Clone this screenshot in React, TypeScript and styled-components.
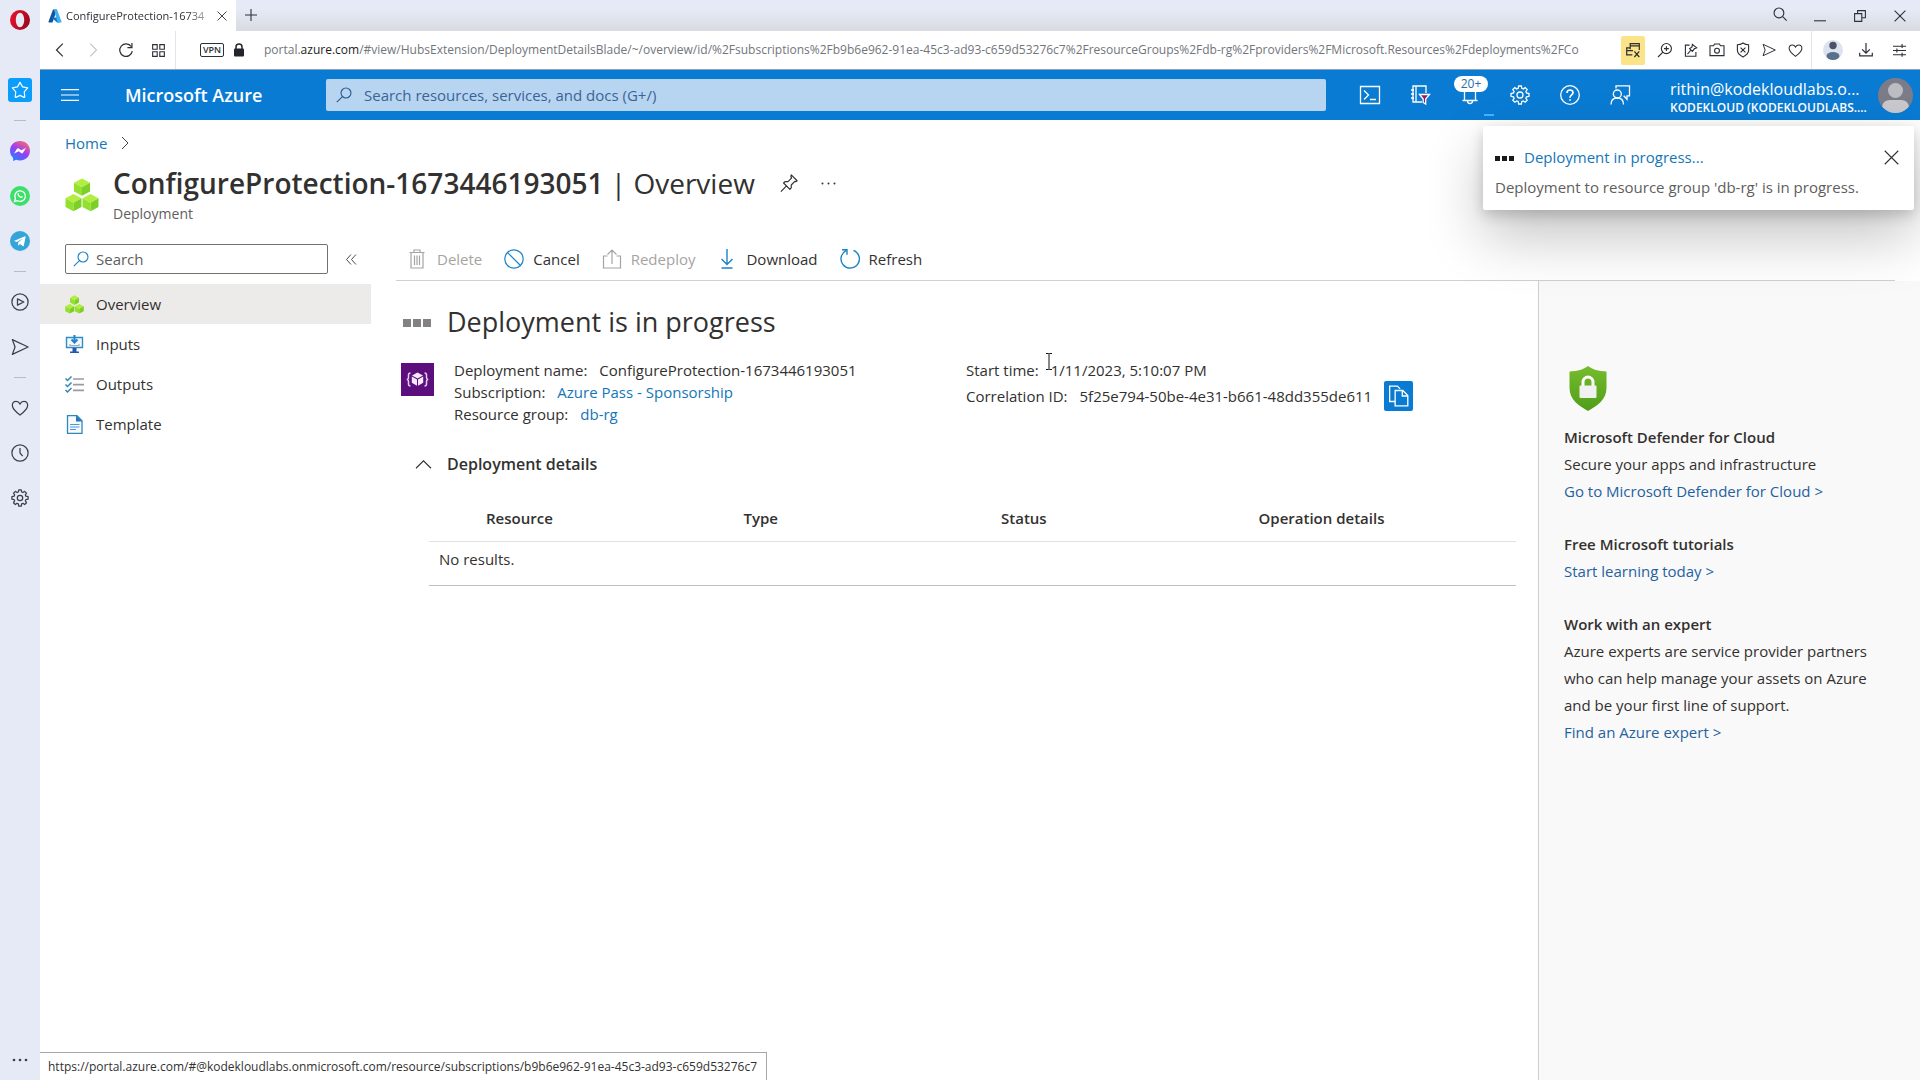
import React from "react";
import styled, { createGlobalStyle, css } from "styled-components";

const color = {
  text: "#323130",
  muted: "#605e5c",
  faded: "#a6a4a2",
  link: "#1476b8",
  panelLink: "#1f62a0",
  azure: "#0a7bd3",
  chrome: "#e6eaf6",
  line: "#d2d0ce",
};

const GlobalStyle = createGlobalStyle`
  *, *::before, *::after { box-sizing: border-box; }
  body {
    margin: 0;
    background: #fff;
    color: ${color.text};
    font-family: "Open Sans", "Noto Sans", sans-serif;
    font-size: 15px;
    line-height: 22px;
  }
  button, input { font: inherit; color: inherit; }
  h1, h2, h3, p, ul, dl, dd { margin: 0; padding: 0; }
  ul { list-style: none; }
  svg { display: block; flex: none; }
`;

/* ---------- icons ---------- */

const StrokeSvg = styled.svg<{ $tone?: string }>`
  fill: none;
  stroke: ${(p) => p.$tone ?? "currentColor"};
  overflow: visible;
`;

type IconProps = {
  size?: number;
  w?: number;
  tone?: string;
  children: React.ReactNode;
};

/* 20-unit grid outline icon */
const Icon = ({ size = 20, w = 1.2, tone, children }: IconProps) => (
  <StrokeSvg width={size} height={size} viewBox="0 0 20 20" strokeWidth={w} $tone={tone} aria-hidden="true">
    {children}
  </StrokeSvg>
);

const GEAR =
  "M8.6 1h2.8l.4 2.3 1.5.6 1.9-1.3 2 2-1.3 1.9.6 1.5 2.5.5v2.8l-2.5.5-.6 1.5 1.3 1.9-2 2-1.9-1.3-1.5.6-.4 2.5H8.6l-.4-2.5-1.5-.6-1.9 1.3-2-2 1.3-1.9-.6-1.5L1 11.3V8.5L3.500 8l.6-1.5-1.3-1.900 2-2 1.900 1.300 1.500-.6z";

const SearchLeft = ({ size = 17, tone }: { size?: number; tone?: string }) => (
  <Icon size={size} tone={tone} w={1.4}>
    <circle cx="12.500" cy="7.500" r="6.200" />
    <path d="M8 12 1 19" />
  </Icon>
);

const Cross = ({ size = 12, w = 1.8 }: { size?: number; w?: number }) => (
  <Icon size={size} w={w}>
    <path d="m1 1 18 18M19 1 1 19" />
  </Icon>
);

const Heart = ({ size = 18 }: { size?: number }) => (
  <Icon size={size} w={1.4}>
    <path d="M10 17.800C5 14 1.500 10.800 1.500 7.200 1.500 4.500 3.400 2.700 5.700 2.700c1.800 0 3.400 1 4.300 2.800.9-1.800 2.500-2.800 4.300-2.800 2.300 0 4.200 1.800 4.200 4.500 0 3.600-3.500 6.800-8.500 10.600z" />
  </Icon>
);

const SendArrow = ({ size = 18 }: { size?: number }) => (
  <Icon size={size} w={1.4}>
    <path d="M1.500 1.800 19 10 1.500 18.200 4.500 10z" strokeLinejoin="round" />
  </Icon>
);

const Cube = ({ x, y }: { x: number; y: number }) => (
  <g stroke="none">
    <path d={`M${x} ${y - 8.5} l8 4.200 -8 4.500 -8 -4.500z`} fill="#b2ee3f" />
    <path d={`M${x - 8} ${y - 4.300} l8 4.500 v8.600 l-8 -4.400z`} fill="#93e02e" />
    <path d={`M${x + 8} ${y - 4.300} l-8 4.500 v8.600 l8 -4.400z`} fill="#7ccf26" />
  </g>
);

const CubesIcon = ({ size }: { size: number }) => (
  <StrokeSvg width={size} height={size} viewBox="0 0 34 34" aria-hidden="true">
    <Cube x={17} y={9} />
    <Cube x={8.500} y={24.500} />
    <Cube x={25.500} y={24.500} />
  </StrokeSvg>
);

const AzureLogo = () => (
  <svg width="14" height="14" viewBox="0 0 28 28" aria-hidden="true">
    <path d="M10 1h8L9 27H2.500A1.500 1.500 0 0 1 1 25z" fill="#12549c" />
    <path d="M7 17h13l3 10h-5z" fill="#0b77d0" />
    <path d="M12 1h6l9 24a1.500 1.500 0 0 1-1.500 2H19z" fill="#3fb0f0" />
  </svg>
);

/* ---------- browser frame ---------- */

const Browser = styled.div`
  display: flex;
  min-height: 100vh;
`;

const Rail = styled.nav`
  display: flex;
  flex: none;
  flex-direction: column;
  align-items: center;
  width: 40px;
  padding: 8px 0;
  background: ${color.chrome};
  color: #3c4048;
`;

const RailGroup = styled.div`
  display: flex;
  flex-direction: column;
  gap: 21px;
`;

const IconButton = styled.button<{ $w?: number; $h?: number }>`
  display: flex;
  flex: none;
  align-items: center;
  justify-content: center;
  width: ${(p) => p.$w ?? 24}px;
  height: ${(p) => p.$h ?? 24}px;
  padding: 0;
  border: 0;
  background: none;
`;

const OperaButton = styled(IconButton)`
  margin-bottom: 46px;
`;

const ActiveRailButton = styled(IconButton)`
  border-radius: 3px;
  background: #0a9dfc;
  color: #fff;
`;

const MoreRailButton = styled(IconButton)`
  margin-top: auto;
`;

const RailDivider = styled.hr`
  width: 12px;
  height: 1px;
  margin: 18px 0;
  border: 0;
  background: #b9bcc6;
`;

const Window = styled.div`
  display: flex;
  flex: 1;
  flex-direction: column;
  min-width: 0;
`;

const TabStrip = styled.div`
  display: flex;
  height: 31px;
  background: linear-gradient(#e6eaf6 30%, #d8dbe0);
  color: #2b2f36;
`;

const Tab = styled.div`
  display: flex;
  align-items: center;
  width: 196px;
  padding: 0 4px 0 8px;
  gap: 4px;
  background: #fff;
`;

const TabTitle = styled.span`
  flex: 1;
  font-size: 11px;
  white-space: nowrap;
  mask-image: linear-gradient(90deg, #000 85%, rgba(0, 0, 0, 0.3));
`;

const WindowControls = styled.div`
  display: flex;
  margin-left: auto;
`;

const AddressBar = styled.div`
  display: flex;
  align-items: center;
  height: 39px;
  padding-left: 3px;
  border-bottom: 1px solid #8fa3b8;
  color: #2b2f36;
`;

const BarDivider = styled.span`
  flex: none;
  width: 1px;
  height: 38px;
  background: #e4e5ea;
`;

const AddressGap = styled.span`
  flex: none;
  width: 3px;
`;

const VpnBadge = styled.button`
  flex: none;
  width: 24px;
  height: 14px;
  margin: 0 9px 0 24px;
  padding: 0;
  border: 1px solid #2b2f36;
  border-radius: 2px;
  background: none;
  font-size: 9px;
  font-weight: 600;
  line-height: 12px;
`;

const Url = styled.div`
  flex: 1;
  min-width: 0;
  margin: 0 4px 0 19px;
  overflow: hidden;
  color: #71757c;
  font-size: 12px;
  white-space: nowrap;
`;

const UrlHost = styled.span`
  color: #1c1e22;
`;

const PopupBlocked = styled(IconButton)`
  margin-right: 7px;
  border-radius: 2px;
  background: #fbe387;
`;

const DisabledIconButton = styled(IconButton)`
  color: #c4c6cb;
`;

const StatusBar = styled.div`
  position: fixed;
  bottom: 0;
  left: 40px;
  height: 28px;
  padding: 3px 9px 0 8px;
  border: 1px solid #a8a8a8;
  border-width: 1px 1px 0 0;
  background: #fff;
  font-size: 12px;
`;

/* ---------- portal top bar ---------- */

const TopBar = styled.header`
  display: flex;
  align-items: center;
  height: 50px;
  background: ${color.azure};
  color: #fff;
`;

const Brand = styled.a`
  width: 201px;
  margin-left: 25px;
  color: #fff;
  font-size: 18px;
  font-weight: 600;
  text-decoration: none;
`;

const searchField = css`
  display: flex;
  align-items: center;
  input {
    flex: 1;
    min-width: 0;
    padding: 0;
    border: 0;
    outline: 0;
    background: none;
  }
`;

const GlobalSearch = styled.label`
  ${searchField}
  flex: 1;
  gap: 12px;
  height: 32px;
  padding: 0 9px 0 10px;
  margin-right: 19px;
  border-radius: 2px;
  background: #b7d5f1;
  color: #285a92;
  input::placeholder { color: #3a6496; opacity: 1; }
`;

const BellButton = styled(IconButton)`
  position: relative;
`;

const Badge = styled.span`
  position: absolute;
  top: 6px;
  left: 9px;
  width: 34px;
  border-radius: 8px;
  background: #fff;
  color: #2a6ca8;
  font-size: 12px;
  line-height: 16px;
`;

const BellProgress = styled.span`
  position: absolute;
  right: 1px;
  bottom: 4px;
  width: 10px;
  height: 2px;
  background: #41b4ff;
`;

const Account = styled.button`
  display: flex;
  align-items: center;
  gap: 12px;
  width: 275px;
  padding: 0 7px 0 25px;
  border: 0;
  background: none;
  text-align: left;
`;

const AccountText = styled.span`
  flex: 1;
  min-width: 0;
  padding-top: 3px;
`;

const AccountMail = styled.span`
  display: block;
  font-size: 16px;
  line-height: 22px;
`;

const AccountTenant = styled.span`
  display: block;
  font-size: 12px;
  font-weight: 600;
  line-height: 16px;
  white-space: nowrap;
`;

/* ---------- blade ---------- */

const Blade = styled.main`
  position: relative;
  display: flex;
  flex: 1;
  flex-direction: column;
`;

const Link = styled.a`
  color: ${color.link};
  text-decoration: none;
`;

const Breadcrumb = styled.nav`
  display: flex;
  align-items: center;
  gap: 12px;
  padding: 12px 25px 0;
`;

const BladeHeader = styled.div`
  display: flex;
  align-items: flex-start;
  gap: 14px;
  padding: 9px 25px 0;
`;

const BladeIcon = styled.span`
  padding-top: 15px;
`;

const TitleRow = styled.div`
  display: flex;
  align-items: center;
  gap: 22px;
`;

const Title = styled.h1`
  font-size: 28px;
  font-weight: 600;
  line-height: 40px;
`;

const TitleSection = styled.span`
  font-weight: 400;
`;

const Subtitle = styled.p`
  margin-top: 1px;
  color: ${color.muted};
  font-size: 14px;
  line-height: 20px;
`;

const TitleActions = styled.div`
  display: flex;
  gap: 16px;
`;

const Columns = styled.div`
  display: flex;
  flex: 1;
  gap: 25px;
`;

const Menu = styled.nav`
  flex: none;
  width: 331px;
  padding-top: 20px;
`;

const MenuSearchRow = styled.div`
  display: flex;
  align-items: center;
  gap: 11px;
  padding: 0 0 10px 25px;
`;

const MenuSearch = styled.label`
  ${searchField}
  gap: 7px;
  width: 263px;
  height: 30px;
  padding: 0 8px 0 7px;
  border: 1px solid #74726f;
  border-radius: 2px;
  input::placeholder { color: ${color.muted}; opacity: 1; }
`;

const MenuItem = styled.a<{ $active?: boolean }>`
  display: flex;
  align-items: center;
  gap: 12px;
  height: 40px;
  padding-left: 25px;
  background: ${(p) => (p.$active ? "#edebe9" : "none")};
  color: ${color.text};
  text-decoration: none;
`;

const Work = styled.div`
  display: flex;
  flex: 1;
  flex-direction: column;
  min-width: 0;
`;

const CommandBar = styled.div`
  display: flex;
  align-items: center;
  gap: 22px;
  height: 57px;
  margin-right: 25px;
  padding: 14px 0 0 12px;
  border-bottom: 1px solid ${color.line};
`;

const Command = styled.button`
  display: flex;
  align-items: center;
  gap: 9px;
  padding: 0;
  border: 0;
  background: none;
  &:disabled { color: ${color.faded}; }
`;

const WorkBody = styled.div`
  display: flex;
  flex: 1;
`;

const Content = styled.section`
  flex: 1;
  min-width: 0;
  padding: 23px 22px 0 5px;
`;

const StatusHeading = styled.div`
  display: flex;
  align-items: center;
  gap: 16px;
  padding-left: 2px;
`;

const Heading = styled.h2`
  font-size: 27px;
  font-weight: 400;
  line-height: 36px;
`;

const Dots = styled.span<{ $size: number; $tone: string }>`
  display: flex;
  gap: 2px;
  padding-top: 2px;
  &::before, &::after, i {
    width: ${(p) => p.$size}px;
    height: ${(p) => p.$size}px;
    background: ${(p) => p.$tone};
    content: "";
  }
`;

const Summary = styled.div`
  display: flex;
  gap: 20px;
  padding: 19px 38px 0 0;
`;

const SummaryIcon = styled.span`
  padding-top: 4px;
`;

const Facts = styled.div`
  display: grid;
  flex: 1;
  grid-template-columns: 1fr 1fr;
`;

const FactList = styled.dl``;

const Fact = styled.div`
  display: flex;
  gap: 12px;
  white-space: nowrap;
`;

const CorrelationFact = styled(Fact)`
  align-items: center;
  height: 30px;
`;

const CopyButton = styled(IconButton)`
  border-radius: 2px;
  background: ${color.azure};
  color: #fff;
`;

const DetailsToggle = styled.button`
  display: flex;
  align-items: center;
  gap: 16px;
  margin: 27px 0 20px;
  padding: 0 0 0 15px;
  border: 0;
  background: none;
  font-size: 16px;
  font-weight: 600;
  line-height: 24px;
`;

const TableWrap = styled.div`
  padding-left: 28px;
`;

const Table = styled.table`
  width: 100%;
  border-collapse: collapse;
  table-layout: fixed;
`;

const HeadCell = styled.th<{ $indent?: boolean }>`
  width: ${(p) => (p.$indent ? "57px" : "auto")};
  height: 45px;
  padding: 0;
  border-bottom: 1px solid #e3e1df;
  font-weight: 600;
  text-align: left;
`;

const EmptyCell = styled.td`
  height: 44px;
  padding: 6px 10px 0;
  border-bottom: 1px solid #c3c1bf;
  vertical-align: top;
`;

const Promo = styled.aside`
  flex: none;
  width: 382px;
  padding: 84px 40px 0 25px;
  border-left: 1px solid #d0cfce;
  background: #faf9f9;
`;

const PromoBlock = styled.section`
  margin-bottom: 26px;
  line-height: 27px;
`;

const PromoTitle = styled.h3`
  font-size: 15px;
  font-weight: 600;
`;

const PromoLink = styled(Link)`
  color: ${color.panelLink};
`;

const ShieldWrap = styled.div`
  margin-bottom: 11px;
`;

const Toast = styled.div`
  position: absolute;
  top: 6px;
  right: 6px;
  width: 431px;
  padding: 19px 13px 12px 12px;
  border-radius: 2px;
  background: #fff;
  box-shadow: 0 26px 58px rgba(0, 0, 0, 0.24), 0 5px 14px rgba(0, 0, 0, 0.18);
`;

const ToastHead = styled.div`
  display: flex;
  align-items: center;
  gap: 10px;
  height: 24px;
  margin-bottom: 7px;
`;

const ToastClose = styled(IconButton)`
  margin-left: auto;
`;

const ToastText = styled.p`
  color: ${color.muted};
`;

const Pointer = styled.svg`
  position: absolute;
  top: 233px;
  left: 1005px;
`;

/* ---------- composed parts ---------- */

const SideRail = () => (
  <Rail aria-label="Browser sidebar">
    <OperaButton aria-label="Opera menu">
      <svg width="20" height="20" viewBox="0 0 20 20">
        <defs>
          <linearGradient id="opera" x1="0" x2="1" y1="0" y2="0.4">
            <stop offset="0" stopColor="#f0142f" />
            <stop offset="1" stopColor="#a00a1c" />
          </linearGradient>
        </defs>
        <path
          d="M10 0a10 10 0 1 0 0 20 10 10 0 0 0 0-20zm0 2.800c2.400 0 4.200 3.200 4.200 7.200s-1.800 7.200-4.200 7.200S5.800 14 5.800 10 7.600 2.800 10 2.800z"
          fill="url(#opera)"
          fillRule="evenodd"
        />
      </svg>
    </OperaButton>
    <ActiveRailButton aria-label="Speed dial">
      <Icon size={18} w={1.3}>
        <path d="m10 1.500 2.800 5 5.700 1.200-3.800 4.300.6 5.700q-.1.700-.8.500L10 16l-4.500 2.200q-.7.200-.8-.5l.6-5.700L1.500 7.700l5.700-1.200z" strokeLinejoin="round" />
      </Icon>
    </ActiveRailButton>
    <RailDivider />
    <RailGroup>
      <IconButton aria-label="Messenger">
        <svg width="20" height="20" viewBox="0 0 20 20">
          <defs>
            <linearGradient id="msgr" x1="0.200" x2="0.800" y1="1" y2="0">
              <stop offset="0" stopColor="#1a86ff" />
              <stop offset="0.500" stopColor="#9a3cf5" />
              <stop offset="1" stopColor="#ff6a70" />
            </linearGradient>
          </defs>
          <path d="M10 0C4.300 0 0 4.200 0 9.700c0 2.900 1.200 5.300 3.100 7V20l3.100-1.200c1.200.4 2.500.6 3.800.6 5.700 0 10-4.200 10-9.700S15.700 0 10 0z" fill="url(#msgr)" />
          <path d="m4 12.500 3-4.700q.8-1 1.900-.3l2.300 1.800 4.800-2.300-3 4.800q-.8 1-1.900.3L8.800 10.300z" fill="#fff" />
        </svg>
      </IconButton>
      <IconButton aria-label="WhatsApp">
        <svg width="20" height="20" viewBox="0 0 20 20">
          <circle cx="10" cy="10" r="10" fill="#3be06a" />
          <path d="m4.500 15.500.9-3A5.300 5.300 0 1 1 7.500 14.700z" fill="none" stroke="#fff" strokeWidth="1.300" />
          <path d="M7.900 7.300q.8-.7 1.200.8-.5.700 0 1.200 1 1 1.700 1.300l.7-.6q1.500.4 1.300.9-.6 1.500-2.300 1Q8 10.800 7.500 9q-.2-1.100.4-1.700z" fill="#fff" />
        </svg>
      </IconButton>
      <IconButton aria-label="Telegram">
        <svg width="20" height="20" viewBox="0 0 20 20">
          <circle cx="10" cy="10" r="10" fill="#35a5d9" />
          <path d="M3.800 10 15 5.300q.8-.1.600.8l-1.800 8.600q-.3.800-1 .4L10 13l-1.400 1.400-.5-.2.100-2.700L13 7.200 7 11z" fill="#fff" />
        </svg>
      </IconButton>
    </RailGroup>
    <RailDivider />
    <RailGroup>
      <IconButton aria-label="Player">
        <Icon size={18} w={1.4}>
          <circle cx="10" cy="10" r="9" />
          <path d="M7.200 6.500v7l7-3.500z" strokeLinejoin="round" />
        </Icon>
      </IconButton>
      <IconButton aria-label="My Flow">
        <SendArrow />
      </IconButton>
    </RailGroup>
    <RailDivider />
    <RailGroup>
      <IconButton aria-label="Bookmarks">
        <Heart />
      </IconButton>
      <IconButton aria-label="History">
        <Icon size={18} w={1.400}>
          <circle cx="10" cy="10" r="9" />
          <path d="M10 4.500V10l3 3.500" />
        </Icon>
      </IconButton>
      <IconButton aria-label="Settings">
        <Icon size={18} w={1.400}>
          <path d={GEAR} strokeLinejoin="round" />
          <circle cx="10" cy="10" r="3" />
        </Icon>
      </IconButton>
    </RailGroup>
    <MoreRailButton aria-label="Sidebar setup">
      <Icon size={16} w={0}>
        <g fill="currentColor">
          <circle cx="2.500" cy="10" r="1.700" />
          <circle cx="10" cy="10" r="1.700" />
          <circle cx="17.500" cy="10" r="1.700" />
        </g>
      </Icon>
    </MoreRailButton>
  </Rail>
);

const Tabs = () => (
  <TabStrip>
    <Tab>
      <AzureLogo />
      <TabTitle>ConfigureProtection-16734</TabTitle>
      <IconButton $w={20} aria-label="Close tab">
        <Cross size={10} />
      </IconButton>
    </Tab>
    <IconButton $w={30} $h={30} aria-label="New tab">
      <Icon size={12} w={1.800}>
        <path d="M10 0v20M0 10h20" />
      </Icon>
    </IconButton>
    <WindowControls>
      <IconButton $w={40} $h={28} aria-label="Search tabs">
        <Icon size={14} w={1.600}>
          <circle cx="8.500" cy="8.500" r="7" />
          <path d="m13.500 13.500 6 6" />
        </Icon>
      </IconButton>
      <IconButton $w={40} $h={31} aria-label="Minimize">
        <Icon size={12} w={1.800}>
          <path d="M0 18h20" />
        </Icon>
      </IconButton>
      <IconButton $w={40} $h={31} aria-label="Restore">
        <Icon size={12} w={1.800}>
          <path d="M1 6h12v13H1zM6 6V1h13v12h-6" />
        </Icon>
      </IconButton>
      <IconButton $w={40} $h={31} aria-label="Close window">
        <Cross />
      </IconButton>
    </WindowControls>
  </TabStrip>
);

const Address = () => (
  <AddressBar>
    <IconButton $w={33} aria-label="Back">
      <Icon size={14} w={1.700}>
        <path d="M14 1 5 10l9 9" />
      </Icon>
    </IconButton>
    <DisabledIconButton $w={33} disabled aria-label="Forward">
      <Icon size={14} w={1.700}>
        <path d="m6 1 9 9-9 9" />
      </Icon>
    </DisabledIconButton>
    <IconButton $w={33} aria-label="Reload">
      <Icon size={14} w={1.700}>
        <path d="M17.500 5A9 9 0 1 0 19 11.500M18.500 0v6.500H12" />
      </Icon>
    </IconButton>
    <IconButton $w={33} aria-label="Speed dial">
      <Icon size={13} w={1.700}>
        <path d="M1 1h7v7H1zM12 1h7v7h-7zM1 12h7v7H1zM12 12h7v7h-7z" />
      </Icon>
    </IconButton>
    <BarDivider />
    <VpnBadge>VPN</VpnBadge>
    <svg width="12" height="14" viewBox="0 0 12 14" aria-hidden="true">
      <path d="M3 6V4a3 3 0 0 1 6 0v2" fill="none" stroke="#22252b" strokeWidth="1.500" />
      <rect x="1" y="5.500" width="10" height="8" rx="1" fill="#22252b" />
    </svg>
    <Url>
      portal.<UrlHost>azure.com</UrlHost>
      /#view/HubsExtension/DeploymentDetailsBlade/~/overview/id/%2Fsubscriptions%2Fb9b6e962-91ea-45c3-ad93-c659d53276c7%2FresourceGroups%2Fdb-rg%2Fproviders%2FMicrosoft.Resources%2Fdeployments%2FCo
    </Url>
    <PopupBlocked $h={29} aria-label="Pop-up blocked">
      <Icon size={14} w={1.700}>
        <path d="M6 9V1h13v9M6 4h13M6 7H1v10h8M1 11h9M12 12l7 8M19 12l-7 8" />
      </Icon>
    </PopupBlocked>
    <IconButton $w={26} aria-label="Zoom">
      <Icon size={14} w={1.600}>
        <circle cx="12" cy="8" r="7.200" />
        <path d="M7 13 0 20M12 4.500v7M8.500 8h7" />
      </Icon>
    </IconButton>
    <IconButton $w={26} aria-label="Pinboards">
      <Icon size={14} w={1.600}>
        <path d="M8 3H2v16h15v-6M12 2l6 5-3 1-3 4-4-4 3.500-2.500zM10 10l-5 6" />
      </Icon>
    </IconButton>
    <IconButton $w={26} aria-label="Snapshot">
      <Icon size={14} w={1.600}>
        <path d="M0 4h5l1.500-2.500h7L15 4h5v14H0z" />
        <circle cx="10" cy="11" r="3.500" />
      </Icon>
    </IconButton>
    <IconButton $w={26} aria-label="Ad blocker">
      <Icon size={14} w={1.600}>
        <path d="M10 0c3 2 6 2.500 8 2.500v8c0 4-4 7.500-8 9.500-4-2-8-5.500-8-9.500v-8C4 2.500 7 2 10 0zM6.500 6.500l7 7M13.500 6.500l-7 7" />
      </Icon>
    </IconButton>
    <IconButton $w={26} aria-label="Send to My Flow">
      <SendArrow size={14} />
    </IconButton>
    <IconButton $w={26} aria-label="Add to bookmarks">
      <Heart size={15} />
    </IconButton>
    <AddressGap />
    <BarDivider />
    <IconButton $w={42} aria-label="Profile">
      <svg width="20" height="20" viewBox="0 0 20 20">
        <circle cx="10" cy="10" r="10" fill="#dde2f0" />
        <circle cx="10" cy="5.500" r="3.700" fill="#4c5266" />
        <ellipse cx="10" cy="16" rx="6.500" ry="4" fill="#59708c" />
      </svg>
    </IconButton>
    <IconButton $w={24} aria-label="Downloads">
      <Icon size={14} w={1.700}>
        <path d="M10 0v14M4.500 9l5.500 5.500L15.500 9M1 14v4.500h18V14" />
      </Icon>
    </IconButton>
    <IconButton $w={42} aria-label="Easy setup">
      <Icon size={13} w={1.700}>
        <path d="M0 3.500h20M0 10h20M0 16.500h20M14 0v6M6 7v6M14 13.500v6" />
      </Icon>
    </IconButton>
  </AddressBar>
);

const PortalBar = () => (
  <TopBar>
    <IconButton $w={60} $h={50} aria-label="Show portal menu">
      <Icon size={18} w={1.300}>
        <path d="M0 4h20M0 10h20M0 16h20" />
      </Icon>
    </IconButton>
    <Brand href="#home">Microsoft Azure</Brand>
    <GlobalSearch>
      <SearchLeft size={16} tone="#285a92" />
      <input aria-label="Search resources" placeholder="Search resources, services, and docs (G+/)" />
    </GlobalSearch>
    <IconButton $w={50} $h={50} aria-label="Cloud Shell">
      <Icon w={1.300}>
        <path d="M.5 1.500h19v17H.5zM4 5.500l4.500 4.500L4 14.500M10 14.500h6" />
      </Icon>
    </IconButton>
    <IconButton $w={50} $h={50} aria-label="Directories and subscriptions">
      <Icon w={1.300}>
        <path d="M12 17H3V1h13v7M6 1v16M1 5h3M1 9h3M1 13h3" />
        <path d="M9.500 9.500h10l-3.800 4.500v5l-2.500-1.500V14z" fill="#8d1f6b" />
      </Icon>
    </IconButton>
    <BellButton $w={50} $h={50} aria-label="Notifications, more than 20">
      <Icon w={1.300}>
        <path d="M4.500 15.500V6a5.500 5.500 0 0 1 11 0v9.500M2.500 15.500h15M7.500 16a2.500 2.500 0 0 0 5 0" />
      </Icon>
      <Badge>20+</Badge>
      <BellProgress />
    </BellButton>
    <IconButton $w={50} $h={50} aria-label="Portal settings">
      <Icon w={1.300}>
        <path d={GEAR} />
        <circle cx="10" cy="10" r="3" />
      </Icon>
    </IconButton>
    <IconButton $w={50} $h={50} aria-label="Help">
      <Icon w={1.300}>
        <circle cx="10" cy="10" r="9.300" />
        <path d="M7 8q0-3 3-3t3 2.700c0 2.300-3 2.200-3 5M10 14.200v1.600" strokeWidth="1.700" />
      </Icon>
    </IconButton>
    <IconButton $w={50} $h={50} aria-label="Feedback">
      <Icon w={1.300}>
        <path d="M6 3.500V.8h13.500v10H17v3.500l-3.300-3.500M1 19.500c0-4 2.500-6.500 6.300-6.500s6.200 2.500 6.200 6.500" />
        <circle cx="7.300" cy="9" r="4" />
      </Icon>
    </IconButton>
    <Account>
      <AccountText>
        <AccountMail>rithin@kodekloudlabs.o...</AccountMail>
        <AccountTenant>KODEKLOUD (KODEKLOUDLABS....</AccountTenant>
      </AccountText>
      <svg width="35" height="35" viewBox="0 0 35 35" aria-hidden="true">
        <defs>
          <clipPath id="avatar">
            <circle cx="17.500" cy="17.500" r="17.500" />
          </clipPath>
        </defs>
        <g clipPath="url(#avatar)">
          <rect width="35" height="35" fill="#7b7c88" />
          <circle cx="17.500" cy="12.500" r="7.500" fill="#bcbcc3" />
          <path d="M4 35V29q1-7 8-7h11q7 0 8 7v6z" fill="#c8c8ce" />
        </g>
      </svg>
    </Account>
  </TopBar>
);

const InputsIcon = () => (
  <svg width="19" height="19" viewBox="0 0 19 19" aria-hidden="true">
    <path d="M1.500 2.500h16v10h-16z" fill="#f2f8fd" stroke="#2f8dc4" strokeWidth="1.400" />
    <path d="M9.500 0v6.500M6.500 4.500l3 3 3-3" fill="none" stroke="#1d84cf" strokeWidth="2" />
    <path d="M5 9v1.500h9V9" fill="none" stroke="#a9adb5" strokeWidth="1.200" />
    <path d="M7.500 13h4v3.500h2.500V18H5v-1.500h2.500z" fill="#2257b8" />
  </svg>
);

const OutputsIcon = () => (
  <svg width="19" height="19" viewBox="0 0 19 19" aria-hidden="true">
    <path d="m.5 3.500 2 2 4-4M.5 9.500l2 2 4-4M.5 15l2 2 4-4" fill="none" stroke="#2f87b5" strokeWidth="1.500" />
    <path d="M8 4h11M8 9.700h11M8 15.300h11" stroke="#9c9ba3" strokeWidth="1.700" />
  </svg>
);

const TemplateIcon = () => (
  <svg width="19" height="19" viewBox="0 0 19 19" aria-hidden="true">
    <path d="M2.500.7h9.500l5 5v12.600H2.500z" fill="#f7fbfe" stroke="#2f87b5" strokeWidth="1.300" />
    <path d="M11 .5v6h6z" fill="#1c76bd" />
    <path d="M5 9.500h9.500M5 12h9.500M5 14.500h6" stroke="#4d9ad6" strokeWidth="1.200" />
  </svg>
);

const menuItems = [
  { label: "Overview", icon: <CubesIcon size={19} />, active: true },
  { label: "Inputs", icon: <InputsIcon /> },
  { label: "Outputs", icon: <OutputsIcon /> },
  { label: "Template", icon: <TemplateIcon /> },
];

const commands = [
  {
    label: "Delete",
    disabled: true,
    icon: (
      <Icon>
        <path d="M1.500 3.500h15M6 3.500V1h6v2.500M3 3.500V19h12V3.500M6.500 6.500v9.500M9 6.500v9.500M11.500 6.500v9.500" />
      </Icon>
    ),
  },
  {
    label: "Cancel",
    icon: (
      <Icon tone="#1b83c6">
        <circle cx="10" cy="10" r="9.200" />
        <path d="m3.500 3.500 13 13" />
      </Icon>
    ),
  },
  {
    label: "Redeploy",
    disabled: true,
    icon: (
      <Icon>
        <path d="M5.500 7H1.500v12h17V7h-4M10 15V1M5.500 5.500 10 1l4.500 4.500" />
      </Icon>
    ),
  },
  {
    label: "Download",
    icon: (
      <Icon tone="#1b83c6">
        <path d="M10 0v15.500M4.500 10l5.500 5.500 5.500-5.500M4.500 19h11" strokeWidth="1.400" />
      </Icon>
    ),
  },
  {
    label: "Refresh",
    icon: (
      <Icon tone="#1b83c6">
        <path d="M13.500 1.300A9.200 9.200 0 1 1 6 1.700M2 .8h5v5" strokeWidth="1.400" />
      </Icon>
    ),
  },
];

const SideMenu = () => (
  <Menu aria-label="Resource menu">
    <MenuSearchRow>
      <MenuSearch>
        <SearchLeft size={16} tone="#1b83c6" />
        <input aria-label="Search menu" placeholder="Search" />
      </MenuSearch>
      <IconButton aria-label="Collapse menu">
        <Icon size={11} w={1.600}>
          <path d="M9 1 1 10l8 9M18 1l-8 9 8 9" />
        </Icon>
      </IconButton>
    </MenuSearchRow>
    <ul>
      {menuItems.map((item) => (
        <li key={item.label}>
          <MenuItem href={`#${item.label.toLowerCase()}`} $active={item.active}>
            {item.icon}
            {item.label}
          </MenuItem>
        </li>
      ))}
    </ul>
  </Menu>
);

const DeploymentSummary = () => (
  <Summary>
    <SummaryIcon>
      <svg width="33" height="33" viewBox="0 0 33 33" aria-hidden="true">
        <rect width="33" height="33" fill="#5c0f7c" />
        <path d="M9.500 10q-2 0-2 2v2.500q0 2-1.800 2 1.800 0 1.800 2V21q0 2 2 2M23.500 10q2 0 2 2v2.500q0 2 1.800 2-1.800 0-1.800 2V21q0 2-2 2" fill="none" stroke="#e4cdf0" strokeWidth="1.500" />
        <path d="m16.500 9.500 5.500 3-5.500 3-5.500-3zM10.800 13.500l5.200 2.900v6.300l-5.200-3zM22.200 13.500 17 16.400v6.300l5.200-3z" fill="#f4eaf9" />
      </svg>
    </SummaryIcon>
    <Facts>
      <FactList>
        <Fact>
          <dt>Deployment name:</dt>
          <dd>ConfigureProtection-1673446193051</dd>
        </Fact>
        <Fact>
          <dt>Subscription:</dt>
          <dd>
            <Link href="#subscription">Azure Pass - Sponsorship</Link>
          </dd>
        </Fact>
        <Fact>
          <dt>Resource group:</dt>
          <dd>
            <Link href="#resource-group">db-rg</Link>
          </dd>
        </Fact>
      </FactList>
      <FactList>
        <Fact>
          <dt>Start time:</dt>
          <dd>1/11/2023, 5:10:07 PM</dd>
        </Fact>
        <CorrelationFact>
          <dt>Correlation ID:</dt>
          <dd>5f25e794-50be-4e31-b661-48dd355de611</dd>
          <CopyButton $w={29} $h={30} aria-label="Copy correlation ID">
            <Icon size={22} w={1.200}>
              <path d="M7 15H1.500V1h7l2.500 2.500M6.500 5h7l4.500 4.500V19H6.500zM13 5v5h5" />
            </Icon>
          </CopyButton>
        </CorrelationFact>
      </FactList>
    </Facts>
  </Summary>
);

const PromoPanel = () => (
  <Promo>
    <ShieldWrap>
      <svg width="48" height="48" viewBox="0 0 48 48" aria-hidden="true">
        <defs>
          <linearGradient id="shield" x1="0" x2="0" y1="0" y2="1">
            <stop offset="0" stopColor="#76bc2d" />
            <stop offset="1" stopColor="#4f9e18" />
          </linearGradient>
        </defs>
        <path d="M24 1c5 3.500 10 5 18.500 5.500V23c0 12-10 18-18.500 23C15.500 41 5.500 35 5.500 23V6.500C14 6 19 4.500 24 1z" fill="url(#shield)" />
        <path d="M19 22v-5a5 5 0 0 1 10 0v5" fill="none" stroke="#fff" strokeWidth="3" />
        <rect x="15.500" y="20.500" width="17" height="12.500" rx="1" fill="#f1f1f1" />
      </svg>
    </ShieldWrap>
    <PromoBlock>
      <PromoTitle>Microsoft Defender for Cloud</PromoTitle>
      <p>Secure your apps and infrastructure</p>
      <PromoLink href="#defender">Go to Microsoft Defender for Cloud &gt;</PromoLink>
    </PromoBlock>
    <PromoBlock>
      <PromoTitle>Free Microsoft tutorials</PromoTitle>
      <PromoLink href="#learn">Start learning today &gt;</PromoLink>
    </PromoBlock>
    <PromoBlock>
      <PromoTitle>Work with an expert</PromoTitle>
      <p>Azure experts are service provider partners who can help manage your assets on Azure and be your first line of support.</p>
      <PromoLink href="#expert">Find an Azure expert &gt;</PromoLink>
    </PromoBlock>
  </Promo>
);

export default function App() {
  return (
    <>
      <GlobalStyle />
      <Browser>
        <SideRail />
        <Window>
          <Tabs />
          <Address />
          <PortalBar />
          <Blade>
            <Breadcrumb aria-label="Breadcrumb">
              <Link href="#home">Home</Link>
              <Icon size={12} w={1.500}>
                <path d="m5 0 10 10L5 20" />
              </Icon>
            </Breadcrumb>
            <BladeHeader>
              <BladeIcon>
                <CubesIcon size={34} />
              </BladeIcon>
              <div>
                <TitleRow>
                  <Title>
                    ConfigureProtection-1673446193051 <TitleSection>| Overview</TitleSection>
                  </Title>
                  <TitleActions>
                    <IconButton aria-label="Pin to dashboard">
                      <Icon size={18} w={1.300}>
                        <path d="m12.500 1 6.500 6.500-1.500 1-1-.3-4 4v3.300l-1.500 1.500L4 10l1.500-1.500h3.300l4-4-.7-2zM7.500 13 1 19.500" strokeLinejoin="round" />
                      </Icon>
                    </IconButton>
                    <IconButton aria-label="More actions">
                      <Icon size={15} w={0}>
                        <g fill="currentColor">
                          <circle cx="2" cy="10" r="1.300" />
                          <circle cx="10" cy="10" r="1.300" />
                          <circle cx="18" cy="10" r="1.300" />
                        </g>
                      </Icon>
                    </IconButton>
                  </TitleActions>
                </TitleRow>
                <Subtitle>Deployment</Subtitle>
              </div>
            </BladeHeader>
            <Columns>
              <SideMenu />
              <Work>
                <CommandBar>
                  {commands.map((c) => (
                    <Command key={c.label} disabled={c.disabled}>
                      {c.icon}
                      {c.label}
                    </Command>
                  ))}
                </CommandBar>
                <WorkBody>
                  <Content>
                    <StatusHeading>
                      <Dots $size={8} $tone="#848280">
                        <i />
                      </Dots>
                      <Heading>Deployment is in progress</Heading>
                    </StatusHeading>
                    <DeploymentSummary />
                    <DetailsToggle aria-expanded="true">
                      <Icon size={15} w={1.500}>
                        <path d="m0 15 10-10 10 10" />
                      </Icon>
                      Deployment details
                    </DetailsToggle>
                    <TableWrap>
                      <Table>
                        <thead>
                          <tr>
                            <HeadCell $indent aria-label="State" />
                            <HeadCell>Resource</HeadCell>
                            <HeadCell>Type</HeadCell>
                            <HeadCell>Status</HeadCell>
                            <HeadCell>Operation details</HeadCell>
                          </tr>
                        </thead>
                        <tbody>
                          <tr>
                            <EmptyCell colSpan={5}>No results.</EmptyCell>
                          </tr>
                        </tbody>
                      </Table>
                    </TableWrap>
                  </Content>
                  <PromoPanel />
                </WorkBody>
              </Work>
            </Columns>
            <Toast role="status">
              <ToastHead>
                <Dots $size={5} $tone="#1b1a19">
                  <i />
                </Dots>
                <Link href="#deployment">Deployment in progress...</Link>
                <ToastClose $w={20} aria-label="Dismiss">
                  <Cross size={15} w={1.500} />
                </ToastClose>
              </ToastHead>
              <ToastText>Deployment to resource group 'db-rg' is in progress.</ToastText>
            </Toast>
            <Pointer width="8" height="17" viewBox="0 0 8 17" aria-hidden="true">
              <path d="M1 .5h2.500L4 1l.5-.5H7M4 1v15M1 16.500h2.500L4 16l.5.500H7" fill="none" stroke="#111" />
            </Pointer>
          </Blade>
        </Window>
      </Browser>
      <StatusBar>https://portal.azure.com/#@kodekloudlabs.onmicrosoft.com/resource/subscriptions/b9b6e962-91ea-45c3-ad93-c659d53276c7</StatusBar>
    </>
  );
}
